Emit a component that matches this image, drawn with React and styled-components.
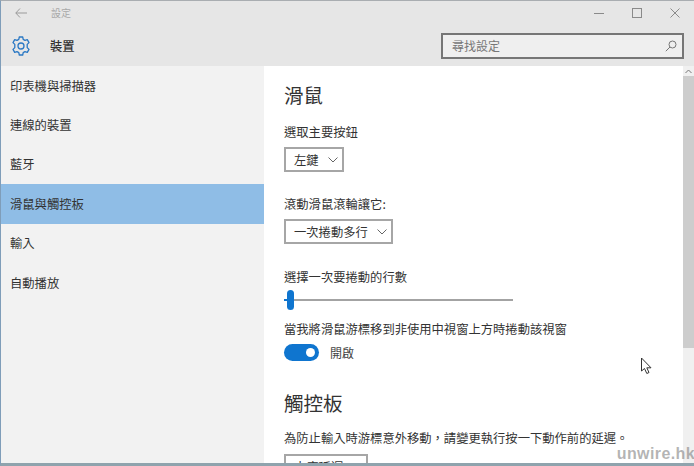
import styled, { createGlobalStyle } from 'styled-components';

const GlobalStyle = createGlobalStyle`
    html, body {
        margin: 0;
        padding: 0;
        background: #fff;
    }
    body {
        font-family: "Noto Sans CJK TC", "Noto Sans", sans-serif;
        color: #2b2b2b;
    }
`

const Window = styled.div`
    position: relative;
    width: 694px;
    height: 466px;
    box-sizing: border-box;
    display: flex;
    flex-direction: column;
    overflow: hidden;
    border-top: 1px solid #a9adb1;
    border-left: 1px solid #7f9db9;
    border-bottom: 3px solid #8fa3ad;
    background: #fff;
`
const Header = styled.div`
    height: 65px;
    flex: none;
    display: flex;
    flex-direction: column;
    background: #e6e6e6;
`
const TitleBar = styled.div`
    height: 24px;
    display: flex;
    align-items: center;
    padding-left: 14px;
`
const AppTitle = styled.span`
    margin: 0 0 2px 24px;
    font-size: 10px;
    color: #a8a8a8;
`
const WindowButtons = styled.div`
    margin-left: auto;
    display: flex;
    align-items: center;
    gap: 28px;
    padding-right: 14px;
`
const HeaderRow = styled.div`
    flex: 1;
    display: flex;
    align-items: center;
    padding: 0 10px 0 10px;
`
const PageTitle = styled.span`
    margin-left: 19px;
    font-size: 12.3px;
    font-weight: 500;
    color: #333;
`
const SearchBox = styled.div`
    margin-left: auto;
    width: 243px;
    height: 26px;
    box-sizing: border-box;
    display: flex;
    align-items: center;
    justify-content: space-between;
    padding: 0 5px 0 9px;
    border: 2px solid #767676;
    background: #efefef;
    font-size: 12px;
    color: #777;
`
const Body = styled.div`
    flex: 1;
    min-height: 0;
    display: flex;
`
const Sidebar = styled.nav`
    width: 263px;
    flex: none;
    background: #f2f2f2;
`
const NavItem = styled.div`
    height: 39.4px;
    display: flex;
    align-items: center;
    padding-left: 9px;
    font-size: 12.3px;
    color: #333;
    background: ${props => props.$active ? '#8fbde6' : 'transparent'};
`
const Content = styled.main`
    flex: 1;
    min-width: 0;
    overflow: hidden;
    padding: 15px 0 0 20px;
`
const SectionTitle = styled.h2`
    margin: 0;
    font-size: 19.5px;
    line-height: 28px;
    font-weight: 400;
    color: #333;
    margin-top: ${props => props.$top || 0}px;
`
const Label = styled.div`
    font-size: 12.3px;
    line-height: 18px;
    color: #333;
    white-space: nowrap;
    margin-top: ${props => props.$top || 0}px;
`
const Select = styled.div`
    width: fit-content;
    height: 25px;
    box-sizing: border-box;
    display: flex;
    align-items: center;
    gap: 9px;
    margin-top: ${props => props.$top || 6}px;
    padding: 0 4px 0 8px;
    border: 2px solid #a6a6a6;
    font-size: 12.3px;
    color: #333;
    background: #fff;
`
const Slider = styled.div`
    position: relative;
    width: 229px;
    height: 20px;
    margin-top: 4px;
`
const SliderTrack = styled.div`
    position: absolute;
    left: 0;
    right: 0;
    top: 9px;
    height: 2px;
    background: #a3a3a3;
`
const SliderThumb = styled.div`
    position: absolute;
    left: 3px;
    top: 0;
    width: 7px;
    height: 20px;
    border-radius: 4px;
    background: #0f75cf;
`
const SliderFill = styled.div`
    position: absolute;
    left: 0;
    top: 9px;
    width: 4px;
    height: 2px;
    background: #0f75cf;
`
const ToggleRow = styled.div`
    display: flex;
    align-items: center;
    gap: 11px;
    margin-top: 6px;
    font-size: 12px;
    color: #444;
`
const Toggle = styled.div`
    width: 35px;
    height: 17px;
    box-sizing: border-box;
    display: flex;
    align-items: center;
    justify-content: flex-end;
    padding-right: 4px;
    border-radius: 9px;
    background: #0f75cf;
`
const ToggleKnob = styled.div`
    width: 9px;
    height: 9px;
    border-radius: 50%;
    background: #fff;
`
const Scrollbar = styled.div`
    width: 11px;
    flex: none;
    display: flex;
    flex-direction: column;
    background: #f0f0f0;
`
const ScrollArrow = styled.div`
    height: 10px;
    display: flex;
    align-items: center;
    justify-content: center;
`
const ScrollThumb = styled.div`
    height: 272px;
    background: #cdcdcd;
`
const Pointer = styled.svg`
    position: absolute;
    left: 639px;
    top: 356px;
`
const Watermark = styled.div`
    position: absolute;
    right: -1px;
    bottom: 0;
    font-family: "Liberation Sans", Arial, sans-serif;
    font-size: 16px;
    font-weight: 700;
    letter-spacing: 0.4px;
    color: rgba(130, 130, 130, 0.6);
`

const Chevron = () => (
    <svg width="10" height="6" viewBox="0 0 10 6" fill="none" stroke="#666" strokeWidth="1">
        <path d="M0.5 0.5 L5 5 L9.5 0.5" />
    </svg>
)

const BackArrow = () => (
    <svg width="12" height="10" viewBox="0 0 12 10" fill="none" stroke="#9a9a9a" strokeWidth="1">
        <path d="M5 0.5 L0.8 5 L5 9.5 M0.8 5 H12" />
    </svg>
)

const Gear = () => (
    <svg width="20" height="20" viewBox="0 0 20 20" fill="none" stroke="#2a78c4" strokeWidth="1.3" strokeLinejoin="round">
        <path d="M8.3 1 H11.7 L12.2 3.4 L14 4.4 L16.3 3.6 L18 6.6 L16.2 8.4 V11.6 L18 13.4 L16.3 16.4 L14 15.6 L12.2 16.6 L11.7 19 H8.3 L7.8 16.6 L6 15.6 L3.7 16.4 L2 13.4 L3.8 11.6 V8.4 L2 6.6 L3.7 3.6 L6 4.4 L7.8 3.4 Z" />
        <circle cx="10" cy="10" r="3" />
    </svg>
)

const Minimize = () => (
    <svg width="10" height="10" viewBox="0 0 10 10" stroke="#8a8a8a" strokeWidth="1">
        <path d="M0 5.5 H10" />
    </svg>
)

const Maximize = () => (
    <svg width="10" height="10" viewBox="0 0 10 10" fill="none" stroke="#8a8a8a" strokeWidth="1">
        <rect x="0.5" y="0.5" width="9" height="9" />
    </svg>
)

const CloseIcon = () => (
    <svg width="10" height="10" viewBox="0 0 10 10" stroke="#8a8a8a" strokeWidth="1">
        <path d="M0.5 0.5 L9.5 9.5 M9.5 0.5 L0.5 9.5" />
    </svg>
)

const SearchIcon = () => (
    <svg width="12" height="12" viewBox="0 0 12 12" fill="none" stroke="#777" strokeWidth="1">
        <circle cx="7.5" cy="4.5" r="3.5" />
        <path d="M5 7 L0.8 11.2" />
    </svg>
)

const navItems = ['印表機與掃描器', '連線的裝置', '藍牙', '滑鼠與觸控板', '輸入', '自動播放'];

const App = () => {
    const navList = navItems.map((item, ind) => {
        return <NavItem key={ind} $active={ind === 3}>{item}</NavItem>
    })

    return (
        <Window>
            <GlobalStyle />
            <Header>
                <TitleBar>
                    <BackArrow />
                    <AppTitle>設定</AppTitle>
                    <WindowButtons>
                        <Minimize />
                        <Maximize />
                        <CloseIcon />
                    </WindowButtons>
                </TitleBar>
                <HeaderRow>
                    <Gear />
                    <PageTitle>裝置</PageTitle>
                    <SearchBox>
                        尋找設定
                        <SearchIcon />
                    </SearchBox>
                </HeaderRow>
            </Header>

            <Body>
                <Sidebar>{navList}</Sidebar>
                <Content>
                    <SectionTitle>滑鼠</SectionTitle>
                    <Label $top={14}>選取主要按鈕</Label>
                    <Select>左鍵 <Chevron /></Select>
                    <Label $top={23}>滾動滑鼠滾輪讓它:</Label>
                    <Select>一次捲動多行 <Chevron /></Select>
                    <Label $top={24}>選擇一次要捲動的行數</Label>
                    <Slider>
                        <SliderTrack />
                        <SliderFill />
                        <SliderThumb />
                    </Slider>
                    <Label $top={10}>當我將滑鼠游標移到非使用中視窗上方時捲動該視窗</Label>
                    <ToggleRow>
                        <Toggle><ToggleKnob /></Toggle>
                        開啟
                    </ToggleRow>
                    <SectionTitle $top={28}>觸控板</SectionTitle>
                    <Label $top={12}>為防止輸入時游標意外移動，請變更執行按一下動作前的延遲。</Label>
                    <Select $top={7}>中度延遲 <Chevron /></Select>
                </Content>
                <Scrollbar>
                    <ScrollArrow>
                        <svg width="7" height="5" viewBox="0 0 7 5" fill="none" stroke="#777" strokeWidth="1">
                            <path d="M0.5 4 L3.5 1 L6.5 4" />
                        </svg>
                    </ScrollArrow>
                    <ScrollThumb />
                </Scrollbar>
            </Body>

            <Pointer width="13" height="18" viewBox="0 0 13 18" fill="#fff" stroke="#333" strokeWidth="1">
                <path d="M1.5 1 V14 L4.5 11.5 L6.8 16.5 L9 15.5 L6.8 10.8 H11 Z" />
            </Pointer>
            <Watermark>unwire.hk</Watermark>
        </Window>
    )
}

export default App;
